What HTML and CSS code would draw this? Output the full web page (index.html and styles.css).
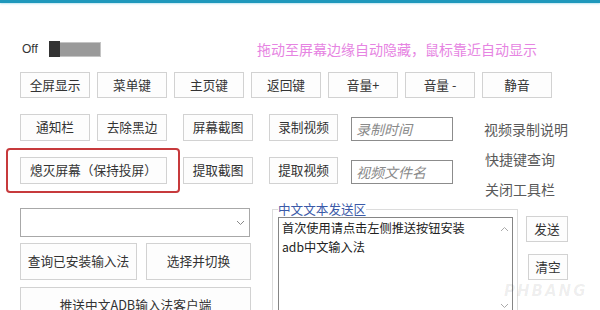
FILE: index.html
```html
<!DOCTYPE html>
<html lang="zh">
<head>
<meta charset="utf-8">
<link rel="stylesheet" href="styles.css">
</head>
<body>
<div class="topbar"></div>
<div class="row0">
  <span class="off">Off</span>
  <span class="toggle"><span class="knob"></span><span class="track"></span></span>
  <span class="hint">拖动至屏幕边缘自动隐藏，鼠标靠近自动显示</span>
</div>
<div class="row1">
  <button class="btn">全屏显示</button>
  <button class="btn">菜单键</button>
  <button class="btn">主页键</button>
  <button class="btn">返回键</button>
  <button class="btn">音量+</button>
  <button class="btn">音量 -</button>
  <button class="btn">静音</button>
</div>
<div class="mid">
  <div class="grid">
    <button class="btn c1">通知栏</button>
    <button class="btn c3">去除黑边</button>
    <button class="btn c5">屏幕截图</button>
    <button class="btn c7">录制视频</button>
    <div class="input c9">录制时间</div>
    <div class="hl c1s"><button class="btn wide">熄灭屏幕（保持投屏）</button></div>
    <button class="btn c5">提取截图</button>
    <button class="btn c7">提取视频</button>
    <div class="input c9">视频文件名</div>
  </div>
  <div class="labels">
    <span class="lbl">视频录制说明</span>
    <span class="lbl">快捷键查询</span>
    <span class="lbl">关闭工具栏</span>
  </div>
</div>
<div class="bottom">
  <div class="leftcol">
    <div class="combo"><svg class="chev" width="9" height="6" viewBox="0 0 9 6"><path d="M1 1 L4.5 4.5 L8 1" fill="none" stroke="#888" stroke-width="1"/></svg></div>
    <div class="pair">
      <button class="btn tall q">查询已安装输入法</button>
      <button class="btn tall s">选择并切换</button>
    </div>
    <button class="btn tall push">推送中文ADB输入法客户端</button>
  </div>
  <fieldset class="group">
    <legend>中文文本发送区</legend>
    <div class="textbox">
      <div class="txt">首次使用请点击左侧推送按钮安装<br>adb中文输入法</div>
      <div class="sbar">
        <svg width="9" height="6" viewBox="0 0 9 6"><path d="M1 5 L4.5 1.5 L8 5" fill="none" stroke="#aaa" stroke-width="1"/></svg>
        <svg width="9" height="6" viewBox="0 0 9 6"><path d="M1 1 L4.5 4.5 L8 1" fill="none" stroke="#aaa" stroke-width="1"/></svg>
      </div>
    </div>
  </fieldset>
  <div class="sendcol">
    <button class="btn send">发送</button>
    <button class="btn clear">清空</button>
    <span class="wm">PHBANG</span>
  </div>
</div>
</body>
</html>
```
FILE: styles.css
```css
html, body {
  margin: 0;
  padding: 0;
}
body {
  width: 600px;
  height: 310px;
  overflow: hidden;
  background: #fff;
  font-family: "Noto Sans CJK SC", "Microsoft YaHei", sans-serif;
  color: #333;
  position: relative;
}
.topbar {
  height: 3px;
  background: #1f98bc;
  box-shadow: 0 1px 2px #bde6f2;
}
.row0 {
  display: flex;
  align-items: center;
  height: 16px;
  margin-top: 38px;
  padding-left: 22px;
}
.off {
  width: 27px;
  font-family: "Liberation Sans", Arial, sans-serif;
  font-size: 12px;
  color: #333;
}
.toggle {
  display: flex;
  align-items: center;
  width: 52px;
  height: 16px;
}
.knob {
  width: 11px;
  height: 16px;
  background: #333;
}
.track {
  width: 40px;
  height: 13px;
  background: #9a9a9a;
  border: 1px solid #c4c4c4;
  border-left: none;
}
.hint {
  margin-left: 156px;
  font-size: 14px;
  line-height: 16px;
  color: #e684e2;
  white-space: nowrap;
}
.btn {
  box-sizing: border-box;
  margin: 0;
  padding: 0;
  background: #fdfdfd;
  border: 1px solid #d2d2d2;
  border-radius: 0;
  font-family: "Noto Sans CJK SC", "Microsoft YaHei", sans-serif;
  font-size: 12.7px;
  color: #333;
  white-space: nowrap;
  line-height: 1;
}
.row1 {
  display: flex;
  gap: 7px;
  margin-top: 15px;
  padding-left: 20px;
}
.row1 .btn {
  width: 70px;
  height: 26px;
}
.mid {
  display: flex;
  margin-top: 16px;
  padding-left: 20px;
}
.grid {
  display: grid;
  grid-template-columns: 70px 7px 70px 16px 70px 16px 69px 13px 102px;
  grid-template-rows: 27px 27px;
  row-gap: 16px;
}
.grid .btn {
  height: 27px;
}
.c1 { grid-column: 1; }
.c3 { grid-column: 3; }
.c5 { grid-column: 5; }
.c7 { grid-column: 7; }
.c9 { grid-column: 9; }
.c1s { grid-column: 1 / 4; }
.input {
  box-sizing: border-box;
  align-self: end;
  height: 24px;
  border: 1px solid #8c8c8c;
  padding-left: 4px;
  font-size: 14px;
  line-height: 22px;
  font-style: italic;
  color: #8a8a8a;
}
.hl {
  position: relative;
  display: flex;
}
.hl .wide {
  width: 147px;
  height: 27px;
}
.hl::after {
  content: "";
  position: absolute;
  top: -9px;
  bottom: -9px;
  left: -14px;
  right: -13px;
  border: 2px solid #c73a3c;
  border-radius: 4px;
  pointer-events: none;
}
.labels {
  display: flex;
  flex-direction: column;
  gap: 10px;
  margin-left: 31px;
  padding-top: 5px;
}
.lbl {
  font-size: 14px;
  line-height: 20px;
  color: #5a5a5a;
  white-space: nowrap;
}
.labels .lbl + .lbl {
  margin-left: 1px;
}
.bottom {
  display: flex;
  align-items: flex-start;
  margin-top: 1px;
  padding-left: 20px;
}
.leftcol {
  width: 231px;
  padding-top: 8px;
  display: flex;
  flex-direction: column;
}
.combo {
  box-sizing: border-box;
  width: 230px;
  height: 29px;
  border: 1px solid #a8a8a8;
  display: flex;
  align-items: center;
  justify-content: flex-end;
  padding-right: 4px;
}
.pair {
  display: flex;
  gap: 9px;
  margin-top: 6px;
}
.tall {
  height: 37px;
}
.q { width: 117px; }
.s { width: 105px; }
.push {
  width: 231px;
  margin-top: 7px;
}
.group {
  box-sizing: border-box;
  width: 246px;
  height: 130px;
  margin: 0 0 0 21px;
  padding: 0 4px 0 5px;
  border: 1px solid #dcdcdc;
  min-width: 0;
}
.group legend {
  padding: 0;
  font-size: 12.6px;
  line-height: 18px;
  color: #3b5aa8;
}
.textbox {
  box-sizing: border-box;
  width: 235px;
  height: 96px;
  margin-top: -1px;
  border: 1px solid #858585;
  display: flex;
}
.txt {
  flex: 1;
  padding: 1px 0 0 3px;
  font-size: 12.2px;
  line-height: 19px;
  color: #222;
  white-space: nowrap;
}
.sbar {
  width: 16px;
  display: flex;
  flex-direction: column;
  justify-content: space-between;
  align-items: center;
  padding: 8px 0 3px;
}
.sendcol {
  position: relative;
  display: flex;
  flex-direction: column;
  align-items: flex-end;
  width: 42px;
  margin-left: 8px;
  padding-top: 16px;
}
.send {
  width: 42px;
  height: 26px;
}
.clear {
  width: 40px;
  height: 26px;
  margin-top: 12px;
}
.wm {
  position: absolute;
  left: -22px;
  top: 82px;
  font-family: "DejaVu Sans", sans-serif;
  font-style: italic;
  font-weight: bold;
  font-size: 15px;
  letter-spacing: 2px;
  color: rgba(0, 0, 0, 0.07);
  white-space: nowrap;
}
```
